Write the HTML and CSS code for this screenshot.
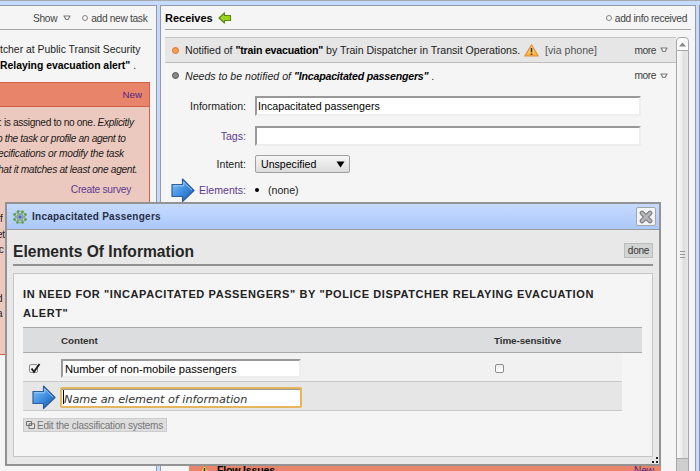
FILE: index.html
```html
<!DOCTYPE html>
<html lang="en">
<head>
<meta charset="utf-8">
<title>Incapacitated Passengers</title>
<link rel="stylesheet" href="styles.css">
</head>
<body>
<svg width="0" height="0" class="defs">
  <defs>
    <linearGradient id="blue" x1="0" y1="0" x2="1" y2="1"><stop offset="0" stop-color="#8cc4f6"/><stop offset=".5" stop-color="#3f8fe0"/><stop offset="1" stop-color="#1452a8"/></linearGradient>
    <linearGradient id="amber" x1="0" y1="0" x2="0" y2="1"><stop offset="0" stop-color="#fff0a0"/><stop offset="1" stop-color="#f8ae2c"/></linearGradient>
    <symbol id="arrow" viewBox="0 0 24 25"><path d="M1 6.5H11.5V1L23 12.5 11.5 23.500V18.500H1Z" fill="url(#blue)" stroke="#2c5d9c" stroke-width="1.200" stroke-linejoin="round"/><path d="M2.300 7.800H12.700V4L21 12.200" fill="none" stroke="#a9d4fa" stroke-width=".8"/></symbol>
    <symbol id="warn" viewBox="0 0 15 13"><path d="M7.500 1 14.200 12H.8Z" fill="url(#amber)" stroke="#e08a3c" stroke-width="1.200" stroke-linejoin="round"/><path d="M7.500 4V8.300M7.500 9.500V11" stroke="#3a3328" stroke-width="1.600"/></symbol>
    <symbol id="tri" viewBox="0 0 8 6"><path d="M1 1H7L5 4.500H3Z" fill="#fff" stroke="#777" stroke-width="1.200" stroke-linejoin="round"/></symbol>
  </defs>
</svg>
<main class="app">
  <section class="panel tasks">
    <header class="bar">
      <span>Show</span><svg class="tri"><use href="#tri"/></svg><i class="ring"></i><span>add new task</span>
    </header>
    <div class="agent">
      <p>tcher at Public Transit Security</p>
      <p><b>Relaying evacuation alert"</b> .</p>
    </div>
    <div class="issue">
      <div class="issue-head">New</div>
      <div class="issue-body">
        <p class="l1">: is assigned to no one. <em>Explicitly</em></p>
        <p class="l2"><em>o the task or profile an agent to</em></p>
        <p class="l3"><em>ecifications or modify the task</em></p>
        <p class="l4"><em>hat it matches at least one agent.</em></p>
        <p class="survey">Create survey</p>
        <p class="sl gap">f</p><p class="sl">et</p><p class="sl">ic</p><p class="sl more-gap">d</p><p class="sl">a</p>
      </div>
    </div>
  </section>

  <section class="panel receives">
    <header class="bar">
      <b>Receives</b>
      <svg class="green" viewBox="0 0 14 12"><path d="M1 6 6.500 1V3.500H12.500V8.500H6.500V11Z" fill="#9fd41c" stroke="#5c8a14" stroke-width="1.200" stroke-linejoin="round"/></svg>
      <span class="push"></span><i class="ring"></i><span>add info received</span>
    </header>
    <div class="content">
      <div class="list">
        <div class="row shaded">
          <i class="dot orange"></i>
          <span class="notified">Notified of <b>"train evacuation"</b> by Train Dispatcher in Transit Operations.</span>
          <svg class="warn"><use href="#warn"/></svg>
          <span class="via">[via phone]</span>
          <span class="more">more <svg class="tri"><use href="#tri"/></svg></span>
        </div>
        <div class="row">
          <i class="dot"></i>
          <span class="needs"><em>Needs to be notified of <b>"Incapacitated passengers"</b></em> .</span>
          <span class="more">more <svg class="tri"><use href="#tri"/></svg></span>
        </div>
        <div class="form">
          <label>Information:</label><div class="input">Incapacitated passengers</div>
          <label class="link">Tags:</label><div class="input"></div>
          <label>Intent:</label><div class="select"><span>Unspecified</span><svg width="9" height="7" viewBox="0 0 9 7"><path d="M.500.500H8.500L4.500 6.500Z"/></svg></div>
          <label class="link elements">Elements:<svg class="arrow"><use href="#arrow"/></svg></label><div class="none"><i></i>(none)</div>
        </div>
        <div class="flow"><svg class="warn"><use href="#warn"/></svg><b>Flow Issues</b><span>New</span></div>
      </div>
      <div class="scroll">
        <div class="up"><svg width="7" height="5"><path d="M0 4.500 3.500 .5 7 4.500Z" fill="#888"/></svg></div>
        <div class="thumb"><i></i><i></i><i></i></div>
        <div class="track"></div>
      </div>
    </div>
  </section>
  <div class="edge"></div>

  <div class="dialog">
    <div class="title">
      <svg class="atom" viewBox="0 0 14 14"><g fill="none" stroke="#87a58f" stroke-width="1"><ellipse cx="7" cy="7" rx="2.600" ry="6"/><ellipse cx="7" cy="7" rx="2.600" ry="6" transform="rotate(60 7 7)"/><ellipse cx="7" cy="7" rx="2.600" ry="6" transform="rotate(120 7 7)"/></g><circle cx="7" cy="7" r="1.800" fill="#5b62b8"/><g fill="#55a02c"><circle cx="5" cy="1.500" r="1.300"/><circle cx="9.500" cy="1.800" r="1.300"/><circle cx="1.500" cy="4.500" r="1.300"/><circle cx="12.500" cy="4.500" r="1.300"/><circle cx="1.500" cy="9.500" r="1.300"/><circle cx="12.500" cy="9.500" r="1.300"/><circle cx="4.500" cy="12.500" r="1.300"/><circle cx="9.500" cy="12.500" r="1.300"/></g></svg>
      <span>Incapacitated Passengers</span>
      <div class="close"><svg width="14" height="14" viewBox="0 0 14 14"><path d="M3 3 11 11M11 3 3 11" stroke="#777" stroke-width="4.600" stroke-linecap="round"/><path d="M3 3 11 11M11 3 3 11" stroke="#b4b4b4" stroke-width="2.800" stroke-linecap="round"/></svg></div>
    </div>
    <div class="body">
      <div class="heading"><h1>Elements Of Information</h1><span class="btn">done</span></div>
      <div class="box">
        <h2>IN NEED FOR "INCAPACITATED PASSENGERS" BY "POLICE DISPATCHER RELAYING EVACUATION<br>ALERT"</h2>
        <div class="thead"><span>Content</span><span>Time-sensitive</span></div>
        <div class="trow"><i class="check"><svg width="12" height="12" viewBox="0 0 12 12"><path d="M2.500 5.500 5 8.800 10.500 1" fill="none" stroke="#222" stroke-width="2"/></svg></i><div class="input">Number of non-mobile passengers</div><i class="check"></i></div>
        <div class="trow alt"><svg class="arrow"><use href="#arrow"/></svg><div class="focus"><em>Name an element of information</em></div></div>
        <div class="edit"><svg width="9" height="8" viewBox="0 0 9 8"><path d="M.5.500H5.500V4.500H.5ZM3 2.800H8.500V7.500H3Z" fill="#e2e2e2" stroke="#666" stroke-width=".9"/></svg><span>Edit the classification systems</span></div>
      </div>
    </div>
    <div class="grip"></div>
  </div>
</main>
</body>
</html>
```
FILE: styles.css
```css
* { box-sizing: border-box; }
body { margin: 0; font: 10.6px "Liberation Sans", Arial, sans-serif; color: #1c1c1c; }
p, h1, h2 { margin: 0; }
i { display: block; }
.defs { position: absolute; }
.app { position: relative; width: 700px; height: 471px; overflow: hidden; display: grid; grid-template-columns: 157px 536px 1px; column-gap: 3px; background: #c5daff; border-top: 1px solid #a6a9a8; padding-top: 4px; }
.panel { background: #f5f5f5; border: 1px solid #939aa5; border-bottom: 0; height: 466px; min-width: 0; overflow: hidden; white-space: nowrap; }
.tasks { border-left: 0; }
.edge { background: #8792a5; }
.bar { display: flex; align-items: center; height: 24px; padding-top: 1px; border-bottom: 1px solid #a4a6a6; font-size: 10.200px; letter-spacing: -.32px; color: #454545; }
.tasks .bar { width: 152px; padding-left: 33px; }
.tri { width: 8px; height: 6px; flex: none; }
.tasks .bar .tri { margin-left: 6px; }
.ring { width: 6px; height: 6px; border: 1.500px solid #858585; border-radius: 50%; flex: none; margin-right: 3px; }
.tasks .ring { margin-left: 11px; }
.agent { margin-top: 12px; height: 40px; line-height: 15.600px; font-size: 10.4px; }
.agent b { color: #000; }
.issue { width: 150px; height: 273px; border: 1px solid #d4604c; border-left: 0; background: #ecc9be; }
.issue-head { height: 24px; background: #e7846a; border-bottom: 1px solid #d4604c; color: #542784; font-size: 9.800px; line-height: 24px; text-align: right; padding-right: 7px; }
.issue-body { padding-top: 8px; font-size: 10.200px; line-height: 15.600px; letter-spacing: -.36px; }
.issue-body .l1 { margin-left: -1px; }
.issue-body .l2 { margin-left: -3px; }
.issue-body .l3 { margin-left: -2px; letter-spacing: -.25px; }
.issue-body .l4 { margin-left: -2px; letter-spacing: -.32px; }
.survey { text-align: right; padding-right: 18px; color: #5d3a92; font-size: 10.200px; letter-spacing: -.25px; margin-top: 5px; }
.sl { font-size: 10px; line-height: 15.600px; margin-left: -3px; }
.sl.gap { margin-top: 13px; margin-left: 0; }
.more-gap { margin-top: 33px; }

.receives { padding-left: 4px; }
.receives .bar { width: 526px; padding-right: 4px; }
.receives .bar b { font-size: 11px; letter-spacing: 0; color: #000; }
.green { width: 14px; height: 12px; margin-left: 5px; }
.push { flex: 1; }
.content { display: flex; margin-top: 7px; height: 434px; width: 524px; }
.list { width: 511px; position: relative; }
.row { height: 25px; display: flex; align-items: center; padding-left: 7px; }
.row.shaded { height: 26px; background: #e6e6e6; border-top: 1px solid #c4c4c4; border-bottom: 1px solid #bdbdbd; }
.row b { color: #000; letter-spacing: -.2px; }
.notified { letter-spacing: -.02px; }
.dot { width: 7px; height: 7px; border-radius: 50%; background: #868686; border: 1px solid #555; margin-right: 6px; flex: none; }
.dot.orange { background: #f7a050; border-color: #d97230; }
.warn { width: 15px; height: 13px; flex: none; }
.row .warn { margin-left: 4px; }
.via { margin-left: 6px; color: #555; }
.more { margin-left: auto; display: flex; align-items: center; gap: 4px; padding-right: 8px; color: #3c3c3c; font-size: 10.200px; letter-spacing: -.4px; }
.form { display: grid; grid-template-columns: 81px 386px; column-gap: 9px; grid-template-rows: 20px 20px 18px 15px; row-gap: 9.500px; align-items: center; margin-top: 8px; }
.form label { text-align: right; color: #222; }
.form .link { color: #5d3a92; }
.input { background: #fff; border: 2px solid; border-color: #999 #eee #eee #999; height: 20px; line-height: 17px; padding-left: 2px; font-size: 10.700px; color: #000; }
.form .input { padding-left: 1px; }
.select { width: 95px; height: 18px; border: 1px solid #a0a0a0; border-radius: 2px; background: linear-gradient(#f6f6f6, #dcdcdc); display: flex; align-items: center; justify-content: space-between; padding: 0 4px 0 5px; color: #000; }
.elements { position: relative; }
.elements .arrow { position: absolute; right: 51px; top: -6px; }
.arrow { width: 24px; height: 25px; }
.none { display: flex; align-items: center; gap: 9px; }
.none i { width: 4px; height: 4px; background: #000; border-radius: 50%; }
.flow { position: absolute; left: 24px; top: 425px; width: 472px; height: 20px; background: #e7846a; display: flex; align-items: flex-start; line-height: 13px; padding: 2px 7px 0 8px; color: #000; }
.flow b { margin-left: 5px; letter-spacing: -.2px; }
.flow span { margin-left: auto; color: #542784; font-size: 10px; }
.scroll { width: 13px; display: flex; flex-direction: column; }
.up { height: 14px; border: 1px solid #a7a7a7; border-radius: 4px 4px 0 0; background: #fafafa; display: grid; place-items: center; }
.thumb { height: 408px; border: 1px solid #a7a7a7; border-top: 0; background: linear-gradient(90deg, #f8f8f8, #eee 45%, #dedede 55%, #e6e6e6); display: flex; flex-direction: column; align-items: center; justify-content: center; gap: 2px; }
.thumb i { width: 5px; height: 1px; background: #999; }
.track { flex: 1; background: #cfcfcf; border: 1px solid #a7a7a7; border-width: 0 1px; }

.dialog { position: absolute; left: 5px; top: 201px; width: 656px; height: 264px; border: 2px solid #939393; background: #e8e8e8; display: flex; flex-direction: column; }
.title { height: 26px; flex: none; display: flex; align-items: center; padding: 0 3px 0 6px; background: linear-gradient(#c6daff, #abc8fa); border-bottom: 1px solid #9b9b9b; font-size: 10px; font-weight: bold; letter-spacing: .25px; color: #273044; }
.atom { width: 14px; height: 14px; margin-right: 5px; }
.close { width: 20px; height: 19px; border: 1px solid #a5a5a5; border-radius: 2px; background: #f3f4f6; margin-left: auto; display: grid; place-items: center; }
.body { padding: 9px 6px 0; }
.heading { height: 27px; display: flex; align-items: center; border-bottom: 2px solid #929292; }
h1 { font-size: 15.600px; color: #262626; }
.btn { margin-left: auto; width: 29px; height: 15px; border: 1px solid #bcbcbc; background: #d3d4d4; text-align: center; line-height: 14px; font-size: 10px; letter-spacing: -.2px; color: #333; margin-bottom: 3px; }
.box { margin-top: 7px; height: 184px; border: 1px solid #c6c6c6; background: #f5f5f5; padding: 11px 9px 0; }
h2 { font-size: 11px; line-height: 19px; height: 42px; color: #222; white-space: nowrap; letter-spacing: .59px; }
.thead { width: 619px; height: 26px; display: flex; align-items: center; background: #dcddde; border-top: 1px solid #aaa; border-bottom: 1px solid #aaa; font-size: 9.900px; letter-spacing: -.1px; font-weight: bold; color: #333; padding-left: 38px; }
.thead span:first-child { width: 433px; }
.trow { width: 599px; height: 29px; display: flex; align-items: center; border-bottom: 1px solid #c8c8c8; background: #f1f1f1; padding: 2px 0 0 6px; }
.trow.alt { background: #e6e6e6; }
.trow .input { width: 240px; height: 19px; margin-left: 23px; font-size: 11.200px; line-height: 17px; }
.trow .check:last-child { margin-left: 194px; }
.check { width: 9px; height: 9px; border: 1px solid #8d8d8d; border-radius: 2px; background: linear-gradient(#eee, #fff); }
.check svg { display: block; margin: -2px 0 0 -1px; }
.trow .arrow { margin-left: 3px; flex: none; }
.focus { margin-left: 4px; width: 242px; height: 21px; background: #fff; border: 2px solid #e5b65c; border-radius: 2px; box-shadow: inset 0 1px #999; font: 11.250px/18px "DejaVu Sans", sans-serif; padding: 1px 0 0 1px; color: #333; }
.focus em { display: block; border-left: 1px solid #000; height: 14px; line-height: 20px; letter-spacing: -.02px; }
.edit { margin-top: 7px; width: 144px; height: 14px; border: 1px solid #ccc; background: #dedede; display: flex; align-items: center; gap: 2px; padding-left: 2px; font-size: 10px; letter-spacing: -.22px; color: #777; white-space: nowrap; }
.grip { position: absolute; right: 1px; bottom: 1px; width: 2px; height: 2px; background: #222; box-shadow: -4px 0 #222, 0 -4px #222; }
```
